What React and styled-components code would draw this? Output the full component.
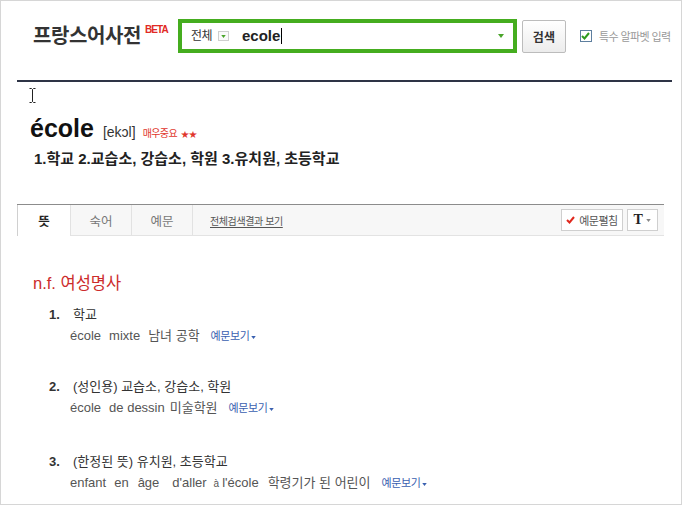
import React from 'react';
import styled, { createGlobalStyle } from 'styled-components';

const Global = createGlobalStyle`
  html, body { margin: 0; padding: 0; background: #fff; }
  body { font-family: 'Liberation Sans', 'Noto Sans CJK KR', sans-serif; color: #333; }
`;

const Frame = styled.div`
  position: relative;
  width: 682px;
  height: 505px;
  box-sizing: border-box;
  border: 1px solid #d6d6d6;
  background: #fff;
  overflow: hidden;
`;

const Header = styled.header`
  display: flex;
  align-items: center;
  height: 70px;
  padding-left: 32px;
`;

const Logo = styled.div`
  display: flex;
  align-items: flex-start;
`;

const LogoText = styled.span`
  font-size: 20px;
  font-weight: bold;
  letter-spacing: -0.4px;
  line-height: 22px;
  color: #333;
`;

const Beta = styled.span`
  font-size: 10px;
  font-weight: bold;
  line-height: 10px;
  color: #e12a24;
  margin-left: 4px;
  letter-spacing: -0.9px;
`;

const SearchBox = styled.div`
  display: flex;
  align-items: center;
  width: 339px;
  height: 34px;
  box-sizing: border-box;
  border: 4px solid #45ad1f;
  margin-left: 10px;
  padding: 0 9px 0 9px;
  background: #fff;
`;

const Scope = styled.span`
  font-size: 12px;
  letter-spacing: -0.5px;
  line-height: 14px;
  color: #333;
`;

const MiniSelect = styled.span`
  display: flex;
  align-items: center;
  justify-content: center;
  width: 11px;
  height: 10px;
  box-sizing: border-box;
  border: 1px solid #cfcfcf;
  margin-left: 6px;
  background: #fafafa;
`;

const Query = styled.span`
  font-size: 15px;
  font-weight: bold;
  line-height: 18px;
  color: #222;
  margin-left: 13px;
`;

const Caret = styled.span`
  width: 1px;
  height: 16px;
  background: #000;
  margin-left: 1px;
`;

const Spacer = styled.span`
  flex: 1;
`;

const SearchButton = styled.button`
  width: 44px;
  height: 33px;
  margin-left: 5px;
  padding: 0;
  border: 1px solid #bcbcbc;
  border-radius: 2px;
  background: linear-gradient(#ffffff, #ececec);
  font-family: inherit;
  font-size: 12px;
  font-weight: bold;
  color: #333;
`;

const CheckLabel = styled.label`
  display: flex;
  align-items: center;
  margin-left: 14px;
  font-size: 11px;
  letter-spacing: -0.6px;
  color: #999;
`;

const CheckBox = styled.span`
  display: flex;
  align-items: center;
  justify-content: center;
  width: 12px;
  height: 12px;
  box-sizing: border-box;
  border: 1px solid #5e7f9f;
  background: #fff;
  margin-right: 7px;
`;

const Rule = styled.div`
  margin: 9px 0 0 16px;
  width: 655px;
  height: 2px;
  background: #2e3446;
`;

const Content = styled.main`
  padding-left: 16px;
`;

const Entry = styled.section`
  padding-left: 13px;
`;

const HeadRow = styled.div`
  margin-top: 31px;
  font-size: 25px;
  font-weight: bold;
  line-height: 30px;
  color: #111;
`;

const Pron = styled.span`
  font-size: 14px;
  font-weight: normal;
  line-height: 1;
  color: #333;
  margin-left: 9px;
`;

const Importance = styled.span`
  font-size: 10px;
  font-weight: normal;
  line-height: 1;
  letter-spacing: -0.6px;
  color: #e0352b;
  margin-left: 7px;
`;

const Stars = styled.span`
  font-size: 8px;
  line-height: 1;
  color: #e0352b;
  margin-left: 4px;
  letter-spacing: 0;
`;

const Summary = styled.div`
  margin-top: 6px;
  padding-left: 4px;
  font-size: 15px;
  font-weight: bold;
  line-height: 19px;
  color: #222;
`;

const TabBar = styled.nav`
  display: flex;
  align-items: stretch;
  width: 647px;
  height: 32px;
  box-sizing: border-box;
  margin-top: 36px;
  border-top: 1px solid #8c8c8c;
  border-bottom: 1px solid #e3e3e3;
  background: #f7f7f7;
`;

const Tab = styled.div`
  display: flex;
  align-items: center;
  justify-content: center;
  width: ${p => p.$w}px;
  box-sizing: border-box;
  border-right: 1px solid #e2e2e2;
  border-left: ${p => (p.$active ? '1px solid #d0d0d0' : 'none')};
  margin-bottom: ${p => (p.$active ? '-1px' : '0')};
  background: ${p => (p.$active ? '#fff' : 'transparent')};
  font-size: 12.5px;
  font-weight: ${p => (p.$active ? 'bold' : 'normal')};
  color: ${p => (p.$active ? '#222' : '#777')};
`;

const TabLink = styled.a`
  align-self: center;
  margin-left: 17px;
  font-size: 10px;
  letter-spacing: -0.4px;
  color: #555;
  text-decoration: underline;
  text-underline-offset: 2px;
`;

const Tools = styled.div`
  display: flex;
  align-items: center;
  margin-left: auto;
  margin-right: 6px;
  gap: 4px;
`;

const ToolButton = styled.span`
  display: flex;
  align-items: center;
  justify-content: center;
  height: 22px;
  width: ${p => p.$w}px;
  box-sizing: border-box;
  border: 1px solid #cfcfcf;
  background: #fff;
  font-size: 11px;
  letter-spacing: -0.5px;
  color: #555;
  gap: 4px;
`;

const SerifT = styled.span`
  font-family: 'Liberation Serif', serif;
  font-weight: bold;
  font-size: 14px;
  color: #222;
`;

const Definitions = styled.section`
  padding-left: 16px;
  margin-top: 35px;
`;

const PosTitle = styled.h2`
  margin: 0;
  font-size: 16.5px;
  font-weight: normal;
  line-height: 24px;
  color: #cc2b2b;
`;

const Item = styled.div`
  margin-top: ${p => p.$mt}px;
  padding-left: 16px;
`;

const ItemTitle = styled.div`
  display: flex;
  align-items: baseline;
  font-size: 13px;
  line-height: 20px;
  color: #333;
`;

const Num = styled.span`
  width: 24px;
  font-weight: bold;
  color: #333;
`;

const Example = styled.div`
  padding-left: 21px;
  margin-top: 1px;
  font-size: 13px;
  line-height: 20px;
  color: #555;
`;

const Fr = styled.span`
  margin-right: ${p => p.$mr ?? 8}px;
  font-size: ${p => (p.$small ? 10 : 13)}px;
`;

const Ko = styled.span`
  margin-right: 11px;
  color: #555;
`;

const MoreLink = styled.a`
  font-size: 11px;
  letter-spacing: -0.4px;
  color: #3a60b0;
`;

const Cursor = styled.svg`
  position: absolute;
  left: 28px;
  top: 87px;
`;

const Arrow = ({ color = '#4aa52a', w = 6, h = 4 }) => (
  <svg width={w} height={h} viewBox="0 0 6 4"><path d="M0 0H6L3 4Z" fill={color} /></svg>
);

const SmallArrow = ({ color }) => (
  <svg width="5" height="3" viewBox="0 0 6 4" style={{ marginLeft: 2, verticalAlign: 'middle' }}>
    <path d="M0 0H6L3 4Z" fill={color} />
  </svg>
);

const items = [
  {
    num: '1.',
    title: '학교',
    ex: [['école'], ['mixte']],
    ko: '남녀 공학',
    mt: 10,
  },
  {
    num: '2.',
    title: '(성인용) 교습소, 강습소, 학원',
    ex: [['école'], ['de dessin', 5]],
    ko: '미술학원',
    mt: 31,
  },
  {
    num: '3.',
    title: '(한정된 뜻) 유치원, 초등학교',
    ex: [['enfant', 8], ['en', 9], ['âge', 13], ["d'aller", 7], ['à', 3, true], ["l'école", 9]],
    ko: '학령기가 된 어린이',
    mt: 34,
  },
];

export default function App() {
  return (
    <>
      <Global />
      <Frame>
        <Header>
          <Logo>
            <LogoText>프랑스어사전</LogoText>
            <Beta>BETA</Beta>
          </Logo>
          <SearchBox>
            <Scope>전체</Scope>
            <MiniSelect><Arrow w={5} h={3} /></MiniSelect>
            <Query>ecole</Query>
            <Caret />
            <Spacer />
            <Arrow />
          </SearchBox>
          <SearchButton>검색</SearchButton>
          <CheckLabel>
            <CheckBox>
              <svg width="9" height="8" viewBox="0 0 9 8">
                <path d="M1 4L3.5 6.5L8 1" stroke="#2f9a1e" strokeWidth="2" fill="none" />
              </svg>
            </CheckBox>
            특수 알파벳 입력
          </CheckLabel>
        </Header>
        <Rule />
        <Cursor width="7" height="15" viewBox="0 0 7 15">
          <path d="M0.5 0.5H2.5L3.5 1.5L4.5 0.5H6.5M3.5 1.5V13.5M0.5 14.5H2.5L3.5 13.5L4.5 14.5H6.5" stroke="#222" strokeWidth="1" fill="none" />
        </Cursor>
        <Content>
          <Entry>
            <HeadRow>
              école
              <Pron>[ekɔl]</Pron>
              <Importance>매우중요</Importance>
              <Stars>★★</Stars>
            </HeadRow>
            <Summary>1.학교 2.교습소, 강습소, 학원 3.유치원, 초등학교</Summary>
          </Entry>
          <TabBar>
            <Tab $w={54} $active>뜻</Tab>
            <Tab $w={61}>숙어</Tab>
            <Tab $w={61}>예문</Tab>
            <TabLink>전체검색결과 보기</TabLink>
            <Tools>
              <ToolButton $w={62}>
                <svg width="9" height="8" viewBox="0 0 9 8">
                  <path d="M1 4L3.5 6.5L8 1" stroke="#e0281e" strokeWidth="2" fill="none" />
                </svg>
                예문펼침
              </ToolButton>
              <ToolButton $w={31}>
                <SerifT>T</SerifT>
                <Arrow color="#888" w={5} h={3} />
              </ToolButton>
            </Tools>
          </TabBar>
          <Definitions>
            <PosTitle>n.f. 여성명사</PosTitle>
            {items.map(it => (
              <Item key={it.num} $mt={it.mt}>
                <ItemTitle>
                  <Num>{it.num}</Num>
                  <span>{it.title}</span>
                </ItemTitle>
                <Example>
                  {it.ex.map(([w, mr, small]) => (
                    <Fr key={w} $mr={mr} $small={small}>{w}</Fr>
                  ))}
                  <Ko>{it.ko}</Ko>
                  <MoreLink>예문보기<SmallArrow color="#3a60b0" /></MoreLink>
                </Example>
              </Item>
            ))}
          </Definitions>
        </Content>
      </Frame>
    </>
  );
}
